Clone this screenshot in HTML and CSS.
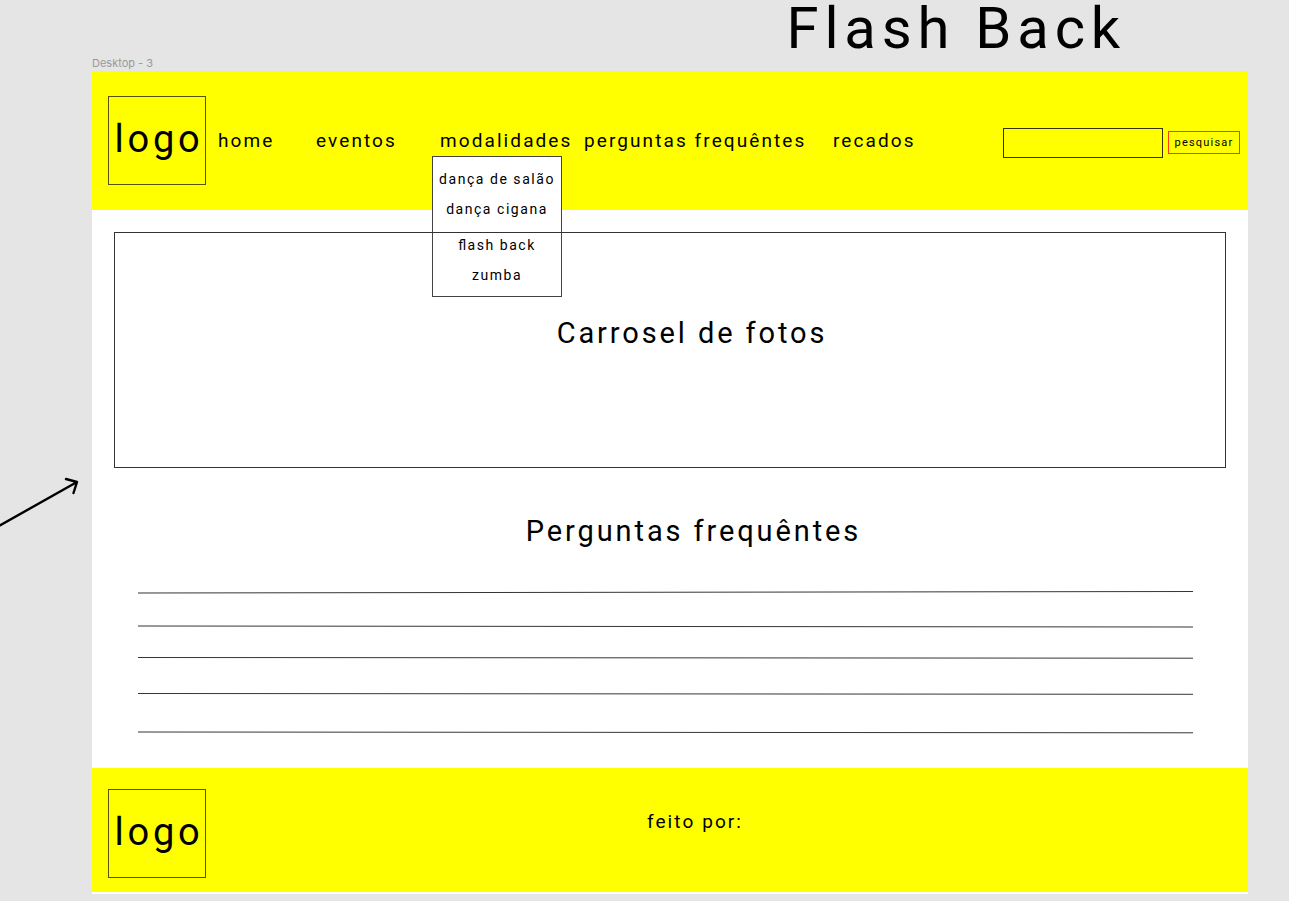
FILE: index.html
```html
<!DOCTYPE html>
<html lang="pt-BR">
<head>
<meta charset="utf-8">
<title>Flash Back</title>
<link rel="stylesheet" href="styles.css">
</head>
<body>
<h1 class="board-title">Flash Back</h1>
<svg class="flow-arrow" width="82" height="52" viewBox="0 0 82 52" aria-hidden="true">
  <path d="M-2 49.5 77 5M66 2l11 3-3.500 11" />
</svg>
<div class="frame-label">Desktop - 3</div>
<div class="frame">
  <header class="header">
    <div class="logo">logo</div>
    <nav aria-label="Principal">
      <ul class="nav">
        <li><a href="#">home</a></li>
        <li><a href="#">eventos</a></li>
        <li class="nav-parent"><a href="#">modalidades</a>
          <ul class="submenu">
            <li><a href="#">dança de salão</a></li>
            <li><a href="#">dança cigana</a></li>
            <li class="submenu-group"><a href="#">flash back</a></li>
            <li><a href="#">zumba</a></li>
          </ul>
        </li>
        <li><a href="#faq">perguntas frequêntes</a></li>
        <li><a href="#">recados</a></li>
      </ul>
    </nav>
    <form class="search">
      <input class="search-input" type="text" aria-label="pesquisar">
      <button class="search-button" type="button">pesquisar</button>
    </form>
  </header>
  <main class="main">
    <section class="carousel"><h2 class="heading">Carrosel de fotos</h2></section>
    <section class="faq" id="faq">
      <h2 class="heading">Perguntas frequêntes</h2>
      <svg class="faq-lines" aria-hidden="true">
        <line x1="0" y1="3" x2="100%" y2="1.500" />
        <line x1="0" y1="36" x2="100%" y2="37" />
        <line x1="0" y1="67.500" x2="100%" y2="68.200" />
        <line x1="0" y1="103.500" x2="100%" y2="104.300" />
        <line x1="0" y1="142" x2="100%" y2="142.800" />
      </svg>
    </section>
  </main>
  <footer class="footer">
    <div class="logo">logo</div>
    <p class="credits">feito por:</p>
  </footer>
</div>
</body>
</html>
```
FILE: styles.css
```css
* {
  box-sizing: border-box;
}

body {
  margin: 0;
  padding: 0 41px 8px 92px;
  background: #e5e5e5;
  color: #000;
  font-family: Roboto, "Liberation Sans", sans-serif;
  font-size: 19px;
  letter-spacing: 0.11em;
}

h1, h2, p, ul {
  margin: 0;
  padding: 0;
  font-weight: 400;
}

ul {
  list-style: none;
}

a {
  color: inherit;
  text-decoration: none;
}

.board-title {
  padding-right: 122px;
  font-size: 58px;
  line-height: 56px;
  text-align: right;
  letter-spacing: 0.1em;
}

.flow-arrow {
  position: absolute;
  left: 0;
  top: 477px;
  fill: none;
  stroke: #000;
  stroke-width: 2.4;
  stroke-linecap: round;
  stroke-linejoin: round;
}

.frame-label {
  color: #999;
  font-family: Inter, sans-serif;
  font-size: 11px;
  line-height: 15px;
  letter-spacing: normal;
}

.frame {
  padding-bottom: 2px;
  background: #fff;
}

.header,
.footer {
  display: flex;
  background: #ff0;
}

.header {
  align-items: center;
  padding: 25px 8px 25px 16px;
}

.logo {
  display: flex;
  flex: none;
  align-items: center;
  justify-content: center;
  width: 98px;
  height: 89px;
  border: 1px solid #550;
  padding: 0 0 4px 4px;
  font-size: 38px;
  letter-spacing: 0.1em;
}

.nav {
  display: grid;
  grid-template-columns: 98px 124px 144px 249px auto;
  margin-left: 12px;
  line-height: 30px;
  white-space: nowrap;
}

.nav-parent {
  position: relative;
}

.submenu {
  position: absolute;
  left: -8px;
  top: 30px;
  width: 130px;
  padding: 7px 0 6px;
  border: 1px solid #444;
  background: #fff;
  font-size: 14px;
  letter-spacing: 0.11em;
  text-align: center;
  font-feature-settings: "liga" 1;
}

.submenu-group {
  margin-top: 6px;
}

.search {
  display: flex;
  align-items: center;
  gap: 5px;
  margin: 4px 0 0 auto;
}

.search-input {
  width: 160px;
  height: 30px;
  padding: 0 8px;
  border: 1px solid #330;
  background: transparent;
  font: inherit;
}

.search-button {
  height: 23px;
  width: 72px;
  padding: 0;
  border: 1px solid #ff3b00;
  background: transparent;
  color: #000;
  font: 400 11px Roboto, sans-serif;
  letter-spacing: 0.11em;
}

.main {
  padding: 22px 22px 33px;
}

.heading {
  font-size: 29px;
  line-height: 34px;
  text-align: center;
  letter-spacing: 0.1em;
}

/* The outline stays above the open submenu. */
.carousel {
  position: relative;
  height: 236px;
  padding: 83px 0 0 44px;
  border: 1px solid #333;
  pointer-events: none;
}

.faq {
  padding: 46px 33px 0 24px;
}

.faq .heading {
  padding-left: 56px;
}

.faq-lines {
  display: block;
  width: 100%;
  height: 145px;
  margin-top: 42px;
  stroke: #000;
  stroke-width: 0.8;
}

.footer {
  padding: 21px 16px 14px;
}

.credits {
  flex: 1;
  padding: 18px 48px 0 0;
  line-height: 30px;
  text-align: center;
}
```
